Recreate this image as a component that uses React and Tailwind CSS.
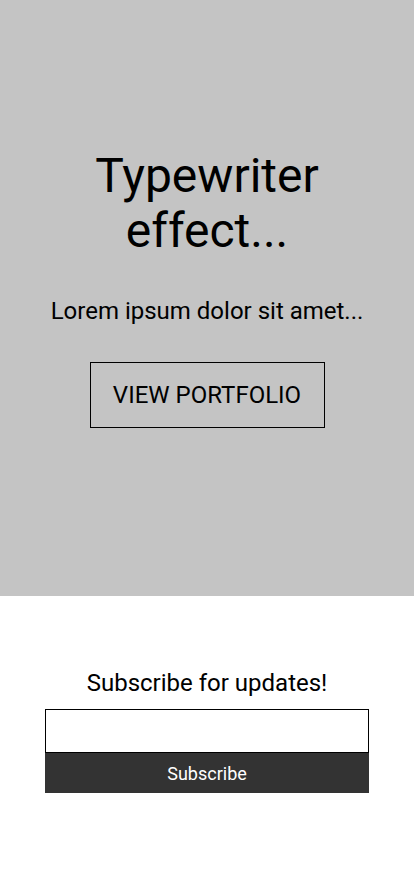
export default function App() {
  return (
    <div className="min-h-[870px] bg-white font-['Roboto',sans-serif] text-black">
      <section className="flex h-[596px] flex-col items-center bg-[#c4c4c4] pt-[148px] text-center">
        <h1 className="w-[260px] text-[48px] leading-[55px] font-normal">Typewriter effect...</h1>
        <p className="mt-[37px] text-[24px] leading-[32px]">Lorem ipsum dolor sit amet...</p>
        <button className="mt-[35px] h-[66px] w-[235px] border border-black text-[24px] leading-none">
          VIEW PORTFOLIO
        </button>
      </section>
      <section className="flex flex-col items-center pt-[71px]">
        <h2 className="text-[24px] leading-[32px]">Subscribe for updates!</h2>
        <form className="mt-[10px] flex w-[324px] flex-col">
          <input type="email" className="h-[44px] w-full border border-black bg-white px-2 outline-none" />
          <button type="button" className="h-[40px] w-full bg-[#333333] text-[18px] text-white">
            Subscribe
          </button>
        </form>
      </section>
    </div>
  );
}
